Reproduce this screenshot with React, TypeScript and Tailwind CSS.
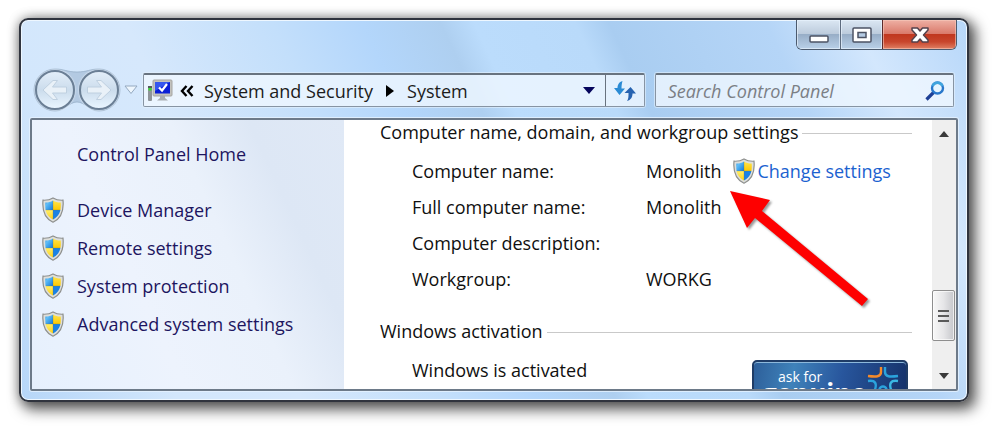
import { useId } from 'react'

const sidebarLinks = ['Device Manager', 'Remote settings', 'System protection', 'Advanced system settings']

const nameRows = [
  { label: 'Computer name:', value: 'Monolith', canChange: true },
  { label: 'Full computer name:', value: 'Monolith' },
  { label: 'Computer description:', value: '' },
  { label: 'Workgroup:', value: 'WORKG' },
]

function ShieldIcon() {
  const id = useId()
  return (
    <svg viewBox="0 0 22 26" className="h-[26px] w-[22px] shrink-0" aria-hidden="true">
      <defs>
        <clipPath id={id}>
          <path d="M11 3.5C13.5 5 16 5.6 18.7 5.5C19.2 13 18 19 11 22.6C4 19 2.8 13 3.3 5.5C6 5.6 8.5 5 11 3.5Z" />
        </clipPath>
        <linearGradient id={id + 'b'} x1="0" y1="0" x2="1" y2="1">
          <stop offset="0" stopColor="#1267c4" />
          <stop offset=".5" stopColor="#5fbdf6" />
          <stop offset="1" stopColor="#0f78dc" />
        </linearGradient>
        <linearGradient id={id + 'y'} x1="0" y1="0" x2="0" y2="1">
          <stop offset="0" stopColor="#ffee6a" />
          <stop offset="1" stopColor="#fcc800" />
        </linearGradient>
      </defs>
      <path
        d="M11 .9C14 2.8 17.5 3.4 21 3.2C21.9 13 20.3 21 11 25.2C1.7 21 .1 13 1 3.2C4.5 3.4 8 2.8 11 .9Z"
        fill="#dedfdb"
        stroke="#8d8f8d"
        strokeWidth="1.2"
      />
      <g clipPath={`url(#${id})`}>
        <rect width="11" height="13" fill={`url(#${id}b)`} />
        <rect x="11" width="11" height="13" fill={`url(#${id}y)`} />
        <rect y="13" width="11" height="13" fill={`url(#${id}y)`} />
        <rect x="11" y="13" width="11" height="13" fill="#1a82e4" />
        <path d="M11 3V23M3 13H19" stroke="#7d7a3c" strokeOpacity=".35" strokeWidth=".8" />
      </g>
    </svg>
  )
}

function ComputerIcon() {
  return (
    <svg viewBox="0 0 26 24" className="h-6 w-[26px] shrink-0" aria-hidden="true">
      <rect x="1" y="7" width="4" height="15" rx="1" fill="#8f9499" />
      <rect x="1" y="7" width="4" height="2" fill="#55595d" />
      <rect x="1.5" y="9" width="3" height="2.5" fill="#35e02c" />
      <rect x="6" y="1" width="19" height="16" rx="1" fill="#c3c2bd" stroke="#a5a5a2" />
      <rect x="8" y="3" width="15" height="11.5" fill="#0b1fd6" />
      <path d="M8 3H23L8 12Z" fill="#3557ee" />
      <path d="M12 8.5L15 11.5L20 5" fill="none" stroke="#fff" strokeWidth="2.2" />
      <path d="M13 17H18V19L21 21.5H10L13 19Z" fill="#a9adb2" />
    </svg>
  )
}

function NavButton({ label, flip }: { label: string; flip?: boolean }) {
  return (
    <button
      aria-label={label}
      className="relative flex h-10 w-10 items-center justify-center rounded-full border-2 border-[#6b7f95] bg-linear-to-b from-[#e3eef9] via-[#cbdcec] to-[#e9f5ff] shadow-[0_0_2px_#ffffff]"
    >
      <svg viewBox="0 0 28 28" className={flip ? 'h-7 w-7 rotate-180' : 'h-7 w-7'} aria-hidden="true">
        <path
          d="M2 14L12 4.5H16.5L11.5 11H25.5V17H11.5L16.5 23.5H12Z"
          fill="#e9f1f8"
          stroke="#bfd0e0"
        />
      </svg>
    </button>
  )
}

function WindowControls() {
  return (
    <div className="mr-[10px] flex h-[30px] overflow-hidden rounded-b-[6px] border border-t-0 border-[#4c5a6d]">
      <button
        aria-label="Minimize"
        className="flex w-11 items-center justify-center border-r border-[#5d6b7e] bg-[linear-gradient(#dbe7f3,#bccbdc_48%,#98aec7_50%,#b9d0e8)] pt-2 shadow-[inset_0_0_0_1px_#e9f3fdaa]"
      >
        <svg viewBox="0 0 20 8" className="h-2 w-5">
          <rect x="1" y="1" width="18" height="6" rx="1" fill="#fff" stroke="#4c5364" strokeWidth="1.5" />
        </svg>
      </button>
      <button
        aria-label="Maximize"
        className="flex w-[42px] items-center justify-center border-r border-[#5d2a2a] bg-[linear-gradient(#dbe7f3,#bccbdc_48%,#98aec7_50%,#b9d0e8)] shadow-[inset_0_0_0_1px_#e9f3fdaa]"
      >
        <svg viewBox="0 0 20 16" className="h-4 w-5">
          <rect x="1" y="1" width="18" height="14" rx="1" fill="#fff" stroke="#4c5364" strokeWidth="1.5" />
          <rect x="6" y="5.5" width="8" height="5" fill="#b5cbe3" stroke="#4c5364" strokeWidth="1.5" />
        </svg>
      </button>
      <button
        aria-label="Close"
        className="flex w-[73px] items-center justify-center bg-[linear-gradient(#eeb0a4,#d9796a_48%,#c0371f_50%,#c8452c_75%,#e08064)] shadow-[inset_0_0_0_1px_#f7c9bd99]"
      >
        <svg viewBox="0 0 20 16" className="h-4 w-5">
          <path
            d="M2 1H7.5L10 4L12.5 1H18V3L13.5 8L18 13V15H12.5L10 12L7.5 15H2V13L6.5 8L2 3Z"
            fill="#fff"
            stroke="#54434d"
            strokeWidth="1.5"
            strokeLinejoin="round"
          />
        </svg>
      </button>
    </div>
  )
}

function Toolbar() {
  return (
    <div className="mt-5 flex h-10 items-center pr-[13px] pl-[14px]">
      <div className="relative flex gap-1">
        <svg viewBox="0 0 88 44" className="absolute -top-[2px] -left-[2px] h-11 w-[88px]" aria-hidden="true">
          <path
            d="M22 1C31 1 34 4 44 4C54 4 57 1 66 1A21 21 0 0 1 66 43C56 43 52 34 44 34C36 34 32 43 22 43A21 21 0 0 1 22 1Z"
            fill="#9db6d0"
            fillOpacity=".6"
            stroke="#8ba4bd"
            strokeOpacity=".6"
          />
        </svg>
        <NavButton label="Back" />
        <NavButton label="Forward" flip />
      </div>
      <button aria-label="Recent pages" className="flex w-6 justify-center">
        <svg viewBox="0 0 14 10" className="h-[10px] w-[14px]">
          <path d="M1 1H13L7 8.5Z" fill="#eef6fd" stroke="#94a9c0" />
        </svg>
      </button>
      <div className="flex h-[34px] flex-[496] items-center rounded-[2px] border border-t-2 border-[#8794a3] border-t-[#68737f] bg-[#f0f7ff]/80 pl-[3px] shadow-[0_0_0_1px_#e4f1fe99]">
        <ComputerIcon />
        <svg viewBox="0 0 14 12" className="ml-[7px] h-3 w-[14px]" aria-hidden="true">
          <path d="M6.5 1L2 6L6.5 11M12.5 1L8 6L12.5 11" fill="none" stroke="#000" strokeWidth="2.4" />
        </svg>
        <a href="#security" className="ml-[10px] whitespace-nowrap text-[#1c1c1c]">System and Security</a>
        <svg viewBox="0 0 8 12" className="ml-[13px] h-3 w-2" aria-hidden="true">
          <path d="M0 0L8 6L0 12Z" fill="#000" />
        </svg>
        <a href="#system" className="ml-[13px] text-[#1c1c1c]">System</a>
        <button aria-label="Previous locations" className="ml-auto flex h-full w-8 items-center justify-center">
          <svg viewBox="0 0 12 7" className="h-[7px] w-3">
            <path d="M0 0H12L6 7Z" fill="#05055c" />
          </svg>
        </button>
        <button aria-label="Refresh" className="flex h-full w-[39px] items-center justify-center border-l border-[#68737f]">
          <svg viewBox="0 0 24 22" className="h-[22px] w-6">
            <path d="M9.5 1C6 2 4.5 5 4.5 8H1L6.5 15L12 8.5H8.5C8.5 5 9 3 9.5 1Z" fill="#2b8bd4" />
            <path d="M14 21C18 20 19.5 17 19.5 13.5H23L17.5 7L11.5 13H15.5C15.5 17 15.5 19 14 21Z" fill="#2763b0" />
          </svg>
        </button>
      </div>
      <label className="ml-[10px] flex h-[34px] flex-[277] items-center rounded-[2px] border border-t-2 border-[#8794a3] border-t-[#68737f] bg-[#f0f7ff]/80 pr-2 pl-3 shadow-[0_0_0_1px_#e4f1fe99]">
        <input
          type="text"
          aria-label="Search Control Panel"
          placeholder="Search Control Panel"
          className="min-w-0 flex-1 bg-transparent italic outline-none placeholder:text-[#7b7f85]"
        />
        <svg viewBox="0 0 20 20" className="h-5 w-5" aria-hidden="true">
          <path d="M8.5 11.5L1.5 18.5" stroke="#1d3f96" strokeWidth="3.2" />
          <circle cx="12.5" cy="7" r="5.5" fill="#e5f5ff" stroke="#2877cb" strokeWidth="2.4" />
          <path d="M7.5 5A5.5 5.5 0 0 1 17.5 5" fill="none" stroke="#3fa5de" strokeWidth="2.4" />
        </svg>
      </label>
    </div>
  )
}

function SectionTitle({ children }: { children: string }) {
  return (
    <div className="flex h-6 items-center gap-1">
      <h2 className="whitespace-nowrap">{children}</h2>
      <div className="mt-[3px] h-px flex-1 bg-[#c9c9c9]" />
    </div>
  )
}

function GenuineBadge() {
  return (
    <div className="relative h-[72px] w-[156px] shrink-0 overflow-hidden rounded-[5px] border-2 border-[#1f3c66] bg-[linear-gradient(100deg,#2d5f9a,#3f82ba_25%,#28569d_55%,#142f66)] pt-[9px] text-white shadow-[inset_0_1px_0_#8db9dc]">
      <p className="pl-6 text-[14px] leading-3">ask for</p>
      <p className="pl-2 text-[26px] leading-5 font-bold">genuine</p>
      <svg viewBox="0 0 34 34" className="absolute top-[5px] right-[6px] h-[34px] w-[34px]" fill="none" strokeWidth="2.4" aria-hidden="true">
        <path d="M15 0V5C15 10 10 10 2 9" stroke="#f58a2a" />
        <path d="M19 0V5C19 10 24 10 32 9" stroke="#2ba3dc" />
        <path d="M2 14C9 13 12 16 8 25" stroke="#2ba3dc" />
        <path d="M32 14C25 13 22 16 26 25" stroke="#3bb8e4" />
        <path d="M13 24C14 18 20 18 21 24" stroke="#2ba3dc" />
      </svg>
    </div>
  )
}

function ScrollBar() {
  return (
    <div className="flex w-6 shrink-0 flex-col items-center bg-[#efefef] pr-px" aria-hidden="true">
      <svg viewBox="0 0 10 6" className="mt-[11px] h-[6px] w-[10px]">
        <path d="M0 6L5 0L10 6Z" fill="#3a3a3a" />
      </svg>
      <div className="mt-auto mb-[32px] flex h-[51px] w-[23px] flex-col items-center justify-center gap-[3px] rounded-[2px] border border-[#8e8e8e] bg-linear-to-r from-[#f8f8f8] via-[#e6e6e8] to-[#c6c7cb] shadow-[inset_0_0_0_1px_#ffffffaa]">
        <div className="h-[2px] w-[11px] bg-[#5a5a5a]" />
        <div className="h-[2px] w-[11px] bg-[#5a5a5a]" />
        <div className="h-[2px] w-[11px] bg-[#5a5a5a]" />
      </div>
      <svg viewBox="0 0 10 6" className="mb-[10px] h-[6px] w-[10px]">
        <path d="M0 0L5 6L10 0Z" fill="#3a3a3a" />
      </svg>
    </div>
  )
}

export default function App() {
  return (
    <div className="h-screen overflow-hidden bg-white pt-[18px] pr-[31px] pb-[31px] pl-[19px] font-['Open_Sans','Noto_Sans',sans-serif] text-[18px] leading-6 text-[#101010]">
      <div className="flex h-full flex-col rounded-[9px] border-2 border-[#30343e] bg-[linear-gradient(65deg,#b6d6f8_0%,#d3e7fc_14%,#d6e8fc_25%,#c3dffb_38%,#b3d6fb_46%,#aecff0_53%,#bbdcfc_56%,#b9dafa_65%,#a9cdf1_68%,#b5d5f7_82%,#d3e7fd_90%,#b7d7f9_100%)] shadow-[inset_0_0_0_1px_#eef7ff,5px_6px_14px_2px_#00000099,0_0_12px_#00000055]">
        <div className="flex justify-end">
          <WindowControls />
        </div>
        <Toolbar />
        <div className="mx-[9px] mt-2 mb-[9px] flex min-h-0 flex-1 overflow-hidden rounded-[2px] border-2 border-[#6d7a89] bg-white shadow-[0_0_0_1px_#e6f3ffcc]">
          <nav className="w-[312px] shrink-0 bg-[linear-gradient(65deg,#e6f0fd,#edf3fd_35%,#eaf1fb_60%,#dde7f5_78%,#e0e9f6)] pt-[21px] text-[#1d1560]">
            <a href="#home" className="flex h-[26px] items-center pl-[45px]">Control Panel Home</a>
            <ul className="mt-6">
              {sidebarLinks.map((item) => (
                <li key={item}>
                  <a href="#settings" className="flex h-[38px] items-center gap-[13px] pl-[10px]">
                    <ShieldIcon />
                    {item}
                  </a>
                </li>
              ))}
            </ul>
          </nav>

          <main className="relative min-w-0 flex-1 overflow-hidden pr-5 pl-9">
            <SectionTitle>Computer name, domain, and workgroup settings</SectionTitle>
            <dl className="mt-[9px] pl-8">
              {nameRows.map((row) => (
                <div key={row.label} className="flex h-9 items-center">
                  <dt className="w-[234px] shrink-0">{row.label}</dt>
                  <dd className="flex items-center whitespace-nowrap">
                    {row.value}
                    {row.canChange && (
                      <a href="#change" className="ml-3 flex items-center gap-[2px] text-[#1b62d0]">
                        <ShieldIcon />
                        Change settings
                      </a>
                    )}
                  </dd>
                </div>
              ))}
            </dl>
            <div className="mt-[22px]">
              <SectionTitle>Windows activation</SectionTitle>
            </div>
            <div className="mt-[9px] flex items-start justify-between pr-1 pl-8">
              <p className="leading-9">Windows is activated</p>
              <div className="pt-2">
                <GenuineBadge />
              </div>
            </div>

            {/* pointer to the change settings link */}
            <svg viewBox="0 0 142 120" className="absolute top-[69px] left-[385px] h-[120px] w-[142px] drop-shadow-[2px_2px_1px_#00000066]" aria-hidden="true">
              <path d="M1 2L41 11L33 22L139 110L133 117L26 29L18 39Z" fill="#fe0000" />
            </svg>
          </main>
          <ScrollBar />
        </div>
      </div>
    </div>
  )
}
